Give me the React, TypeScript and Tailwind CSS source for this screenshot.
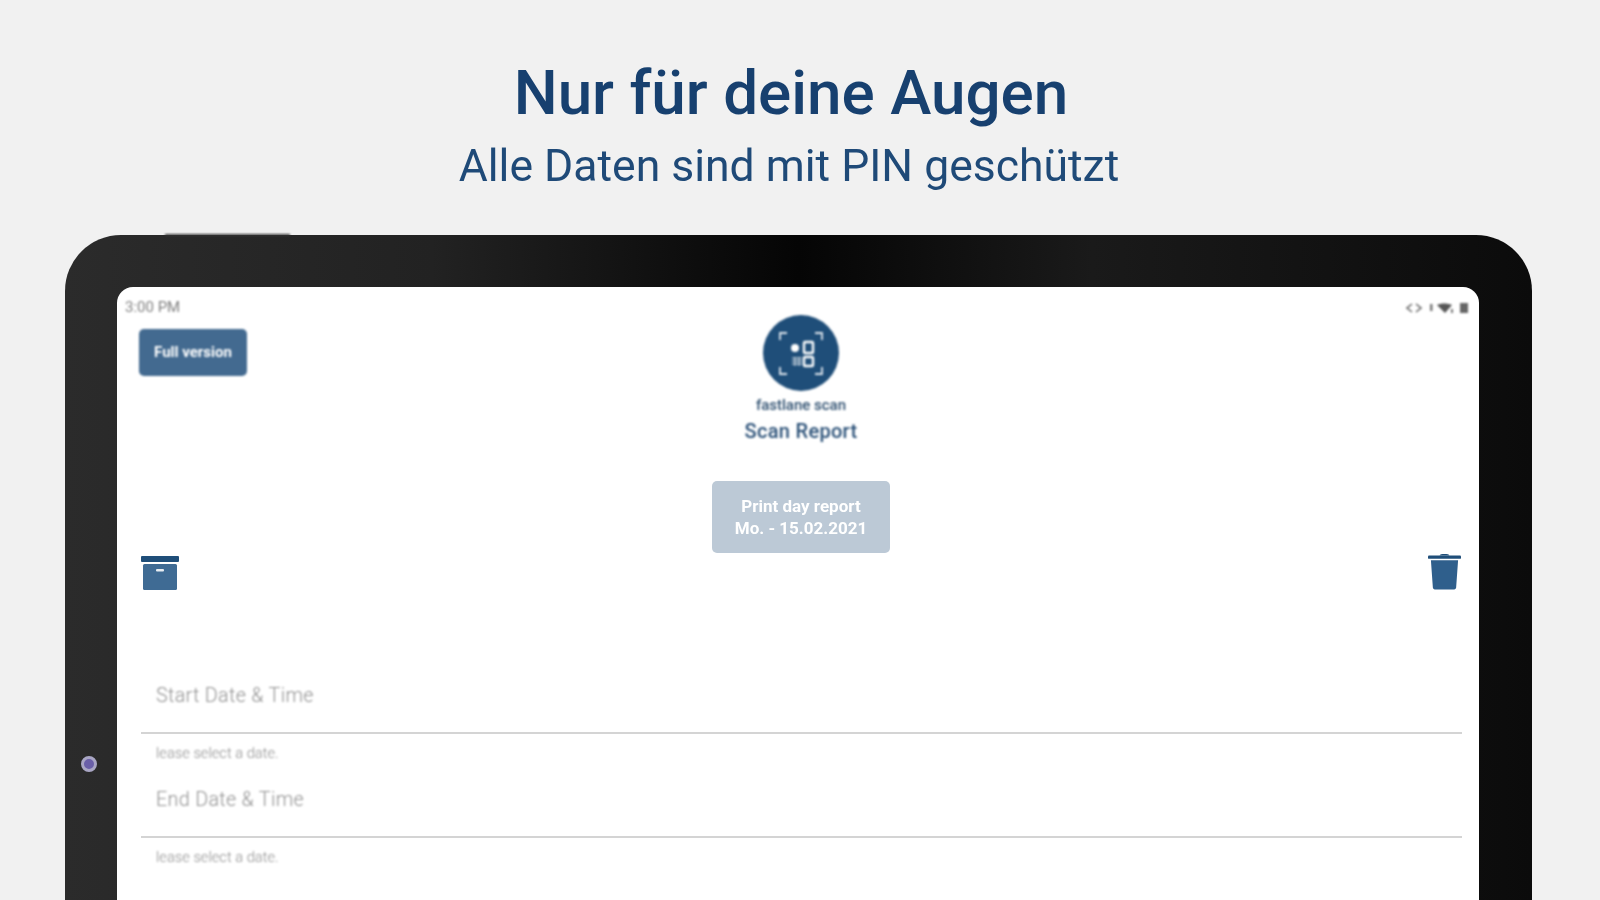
const ScanLogo = () => (
    <svg viewBox="0 0 76 76" className="w-[76px] h-[76px] blur-[0.8px]">
        <circle cx="38" cy="38" r="38" fill="#1f4e79" />
        <g fill="none" stroke="#dfe6ed" strokeWidth="1.8">
            <path d="M17 25v-7h7M52 18h7v7M59 52v7h-7M24 59h-7v-7" />
        </g>
        <circle cx="32" cy="33" r="4" fill="#ffffff" />
        <rect x="41" y="27" width="9" height="11" rx="1" fill="none" stroke="#ffffff" strokeWidth="2.4" />
        <rect x="41" y="42" width="9" height="9" rx="1" fill="none" stroke="#ffffff" strokeWidth="2.4" />
        <path d="M29 43h10M29 46h10M29 49h10M32 42v9M36 42v9" stroke="#dfe6ed" strokeWidth="1" />
    </svg>
);

const ArchiveIcon = () => (
    <svg viewBox="0 0 38 34" className="w-[38px] h-[34px] blur-[0.6px]">
        <rect x="0" y="0" width="38" height="6" rx="1" fill="#1f4e79" />
        <rect x="2" y="8" width="34" height="26" rx="1.5" fill="#3f6b94" />
        <rect x="15" y="13" width="8" height="2.5" rx="1" fill="#e8edf2" />
    </svg>
);

const TrashIcon = () => (
    <svg viewBox="0 0 34 38" className="w-[33px] h-[38px] blur-[0.6px]">
        <path d="M12 3c0-2 10-2 10 0z" fill="#1f4e79" />
        <rect x="0" y="3" width="34" height="3.5" rx="1" fill="#1f4e79" />
        <path d="M3 8h28l-2 28c0 1-1 2-2 2H7c-1 0-2-1-2-2z" fill="#2f5f8c" />
    </svg>
);

const StatusIcons = () => (
    <svg viewBox="0 0 64 12" className="w-[64px] h-[12px] blur-[0.8px]">
        <path d="M6 2 1 6l5 4M10 2l5 4-5 4" fill="none" stroke="#666" strokeWidth="1.6" />
        <rect x="24" y="2" width="2.5" height="7" fill="#777" />
        <path d="M31 3c4-2 10-2 15 0l-7 8z" fill="#555" />
        <rect x="45" y="7" width="2" height="4" fill="#777" />
        <rect x="54" y="1" width="8" height="10" fill="#666" />
    </svg>
);

const DateField = ({ label }: { label: string }) => (
    <div className="flex flex-col">
        <div className="h-[68px] flex items-center px-[15px] pb-[6px] border-b-2 border-[#d4d4d4]">
            <span className="text-[19.8px] font-light text-[#909090] tracking-[0.3px] blur-[0.8px]">{label}</span>
        </div>
        <div className="h-[36px] px-[15px] pt-[10px] text-[14.7px] leading-[18px] font-light text-[#8c8c8c] blur-[0.8px]">lease select a date.</div>
    </div>
);

export default function App() {
    return (
        <div className="h-[900px] overflow-hidden bg-[#f1f1f1] flex flex-col items-center font-['Roboto',sans-serif]">
            <div className="flex flex-col items-center pr-[18px]">
                <h1 className="mt-[57px] text-[62px] leading-[72px] font-medium text-[#17406f] blur-[0.6px]">Nur für deine Augen</h1>
                <p className="mt-[8px] mr-[4px] text-[44.5px] leading-[58px] text-[#1f4a78] blur-[0.6px]">Alle Daten sind mit PIN geschützt</p>
            </div>

            <div className="relative mt-[40px] mr-[3px] flex-1 w-[1467px] rounded-t-[56px] pl-[52px] pr-[53px] pt-[52px] bg-[linear-gradient(90deg,#2b2b2b_0%,#222222_25%,#050505_50%,#1a1a1a_70%,#0b0b0b_100%)]">
                <div className="absolute left-[100px] -top-[1px] w-[125px] h-[2px] bg-[#333333] blur-[0.8px]" />
                <div className="absolute left-[16px] top-[521px] w-[16px] h-[16px] rounded-full bg-[#6a5fa8] border-[3px] border-[#a9a6c4] blur-[0.6px]" />

                <div className="h-full rounded-t-[16px] bg-white flex flex-col">
                    <div className="flex justify-between items-center h-[28px] pl-[8px] pr-[9px] pt-[13px]">
                        <span className="text-[15px] text-[#808080] blur-[0.8px]">3:00 PM</span>
                        <StatusIcons />
                    </div>

                    <div className="grid grid-cols-[1fr_auto_1fr] items-start">
                        <div className="pl-[22px] pt-[14px]">
                            <button className="w-[108px] h-[47px] rounded-[5px] bg-[#436a90] text-white text-[15px] font-bold blur-[0.8px]">Full version</button>
                        </div>
                        <div className="flex flex-col items-center ml-[6px]">
                            <ScanLogo />
                            <span className="mt-[5px] text-[15px] leading-[18px] font-medium text-[#2f5070] blur-[0.8px]">fastlane scan</span>
                            <span className="mt-[4px] text-[20px] leading-[26px] font-medium text-[#2b5178] tracking-[0.3px] blur-[0.8px]">Scan Report</span>
                        </div>
                        <div />
                    </div>

                    <div className="flex justify-center mt-[37px] pl-[6px]">
                        <button className="w-[178px] h-[72px] rounded-[5px] bg-[#bcc9d6] text-white text-[17px] leading-[22px] font-bold blur-[0.7px]">
                            Print day report
                            <br />
                            Mo. - 15.02.2021
                        </button>
                    </div>

                    <div className="flex justify-between items-start pl-[24px] pr-[18px] h-[80px]">
                        <div className="pt-[3px]"><ArchiveIcon /></div>
                        <div className="-mt-[1px]"><TrashIcon /></div>
                    </div>

                    <div className="ml-[24px] mr-[17px] mt-[33px] flex flex-col">
                        <DateField label="Start Date & Time" />
                        <DateField label="End Date & Time" />
                    </div>
                </div>
            </div>
        </div>
    );
}
